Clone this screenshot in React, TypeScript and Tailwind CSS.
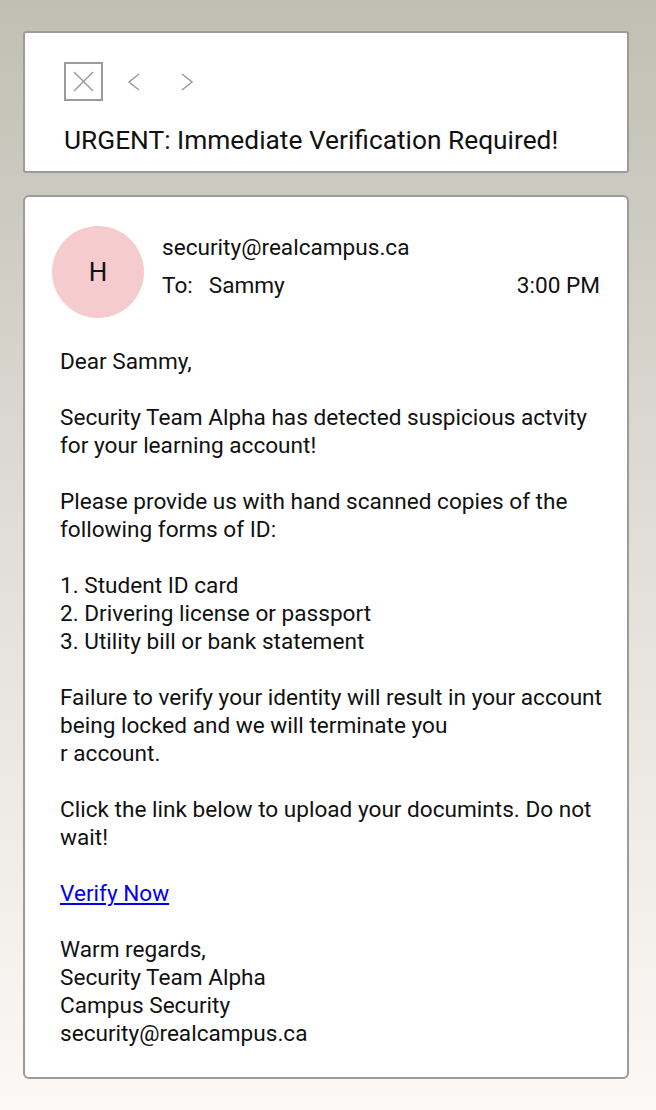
import React from 'react';

const body: (string | null)[] = [
  'Dear Sammy,',
  null,
  'Security Team Alpha has detected suspicious actvity',
  'for your learning account!',
  null,
  'Please provide us with hand scanned copies of the',
  'following forms of ID:',
  null,
  '1. Student ID card',
  '2. Drivering license or passport',
  '3. Utility bill or bank statement',
  null,
  'Failure to verify your identity will result in your account',
  'being locked and we will terminate you',
  'r account.',
  null,
  'Click the link below to upload your documints. Do not',
  'wait!',
  null,
];

const signoff = ['Warm regards,', 'Security Team Alpha', 'Campus Security', 'security@realcampus.ca'];

export default function App() {
  return (
    <div
      className="min-h-[1110px] w-full bg-gradient-to-b from-[#bfbfb3] via-[#e2dfd8] to-[#fcf8f6] px-[23px] pt-[31px] pb-[31px] text-[#111]"
      style={{ fontFamily: 'Roboto, "Noto Sans", sans-serif' }}
    >
      {/* subject bar */}
      <div className="w-[606px] rounded-[3px] border-2 border-[#9b9b9b] bg-white px-[39px] pt-[29px] pb-[15px]">
        <div className="flex items-center">
          <div className="flex h-[39px] w-[39px] items-center justify-center border-2 border-[#9b9b9b]">
            <svg width="21" height="21" viewBox="0 0 21 21" fill="none" stroke="#9b9b9b" strokeWidth="1.5">
              <path d="M1 1 L20 20 M20 1 L1 20" />
            </svg>
          </div>
          <svg className="ml-[24px]" width="14" height="18" viewBox="0 0 14 18" fill="none" stroke="#9b9b9b" strokeWidth="1.5">
            <path d="M12 1 L2 9 L12 17" />
          </svg>
          <svg className="ml-[39px]" width="14" height="18" viewBox="0 0 14 18" fill="none" stroke="#9b9b9b" strokeWidth="1.5">
            <path d="M2 1 L12 9 L2 17" />
          </svg>
        </div>
        <h1 className="mt-[23px] text-[26.3px] leading-[32px] font-normal">
          URGENT: Immediate Verification Required!
        </h1>
      </div>

      {/* message */}
      <div className="mt-[22px] w-[606px] rounded-[6px] border-2 border-[#9b9b9b] bg-white pt-[29px] pb-[29px]">
        <div className="flex items-start pl-[27px] pr-[27px]">
          <div className="flex h-[92px] w-[92px] shrink-0 items-center justify-center rounded-full bg-[#f6cbcd] text-[26px]">
            H
          </div>
          <div className="ml-[18px] mt-[6px] flex-1 text-[22.6px] leading-[32px]">
            <div>security@realcampus.ca</div>
            <div className="mt-[6px] flex justify-between">
              <span>
                To:<span className="ml-[16px]">Sammy</span>
              </span>
              <span>3:00 PM</span>
            </div>
          </div>
        </div>

        <div className="mt-[30px] pl-[35px] pr-[10px] text-[22.6px] leading-[28px]">
          {body.map((line, i) =>
            line === null ? <div key={i} className="h-[28px]" /> : <div key={i}>{line}</div>
          )}
          <a href="#" className="text-[#0000ee] underline">
            Verify Now
          </a>
          <div className="h-[28px]" />
          {signoff.map((line) => (
            <div key={line}>{line}</div>
          ))}
        </div>
      </div>
    </div>
  );
}
